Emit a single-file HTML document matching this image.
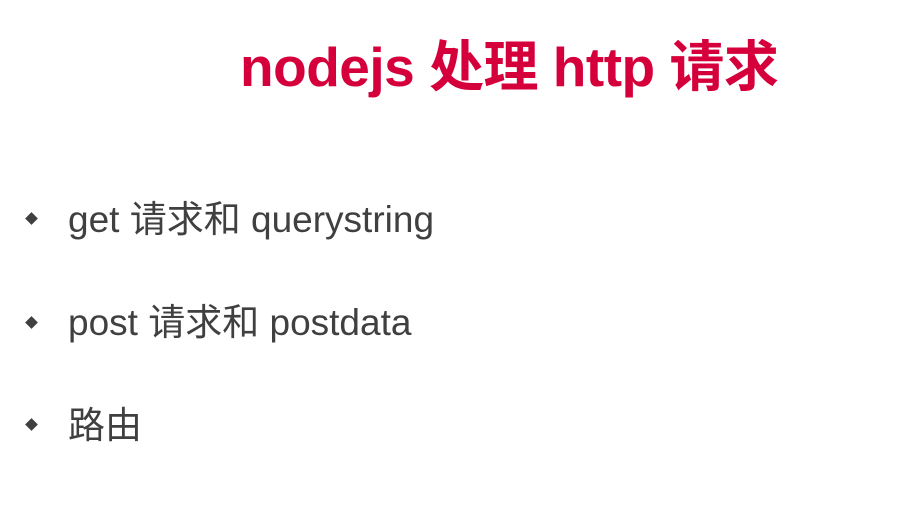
<!DOCTYPE html>
<html><head><meta charset="utf-8"><style>
html,body{margin:0;padding:0;background:#fff;}
body{width:898px;height:529px;position:relative;overflow:hidden;font-family:"Liberation Sans","Noto Sans CJK SC",sans-serif;}
.t{position:absolute;left:240px;top:37px;font-size:55px;font-weight:bold;color:#d5003b;white-space:nowrap;line-height:60px;letter-spacing:-0.5px;}
.i{position:absolute;left:68px;font-size:37px;color:#404040;white-space:nowrap;line-height:40px;}
.d{position:absolute;left:27px;width:9px;height:9px;background:#404040;transform:rotate(45deg);}
</style></head><body>
<div class="t">nodejs 处理 http 请求</div>
<div class="d" style="top:214px"></div><div class="i" style="top:200px">get 请求和 querystring</div>
<div class="d" style="top:318px"></div><div class="i" style="top:303px">post 请求和 postdata</div>
<div class="d" style="top:420px"></div><div class="i" style="top:406px">路由</div>
</body></html>
